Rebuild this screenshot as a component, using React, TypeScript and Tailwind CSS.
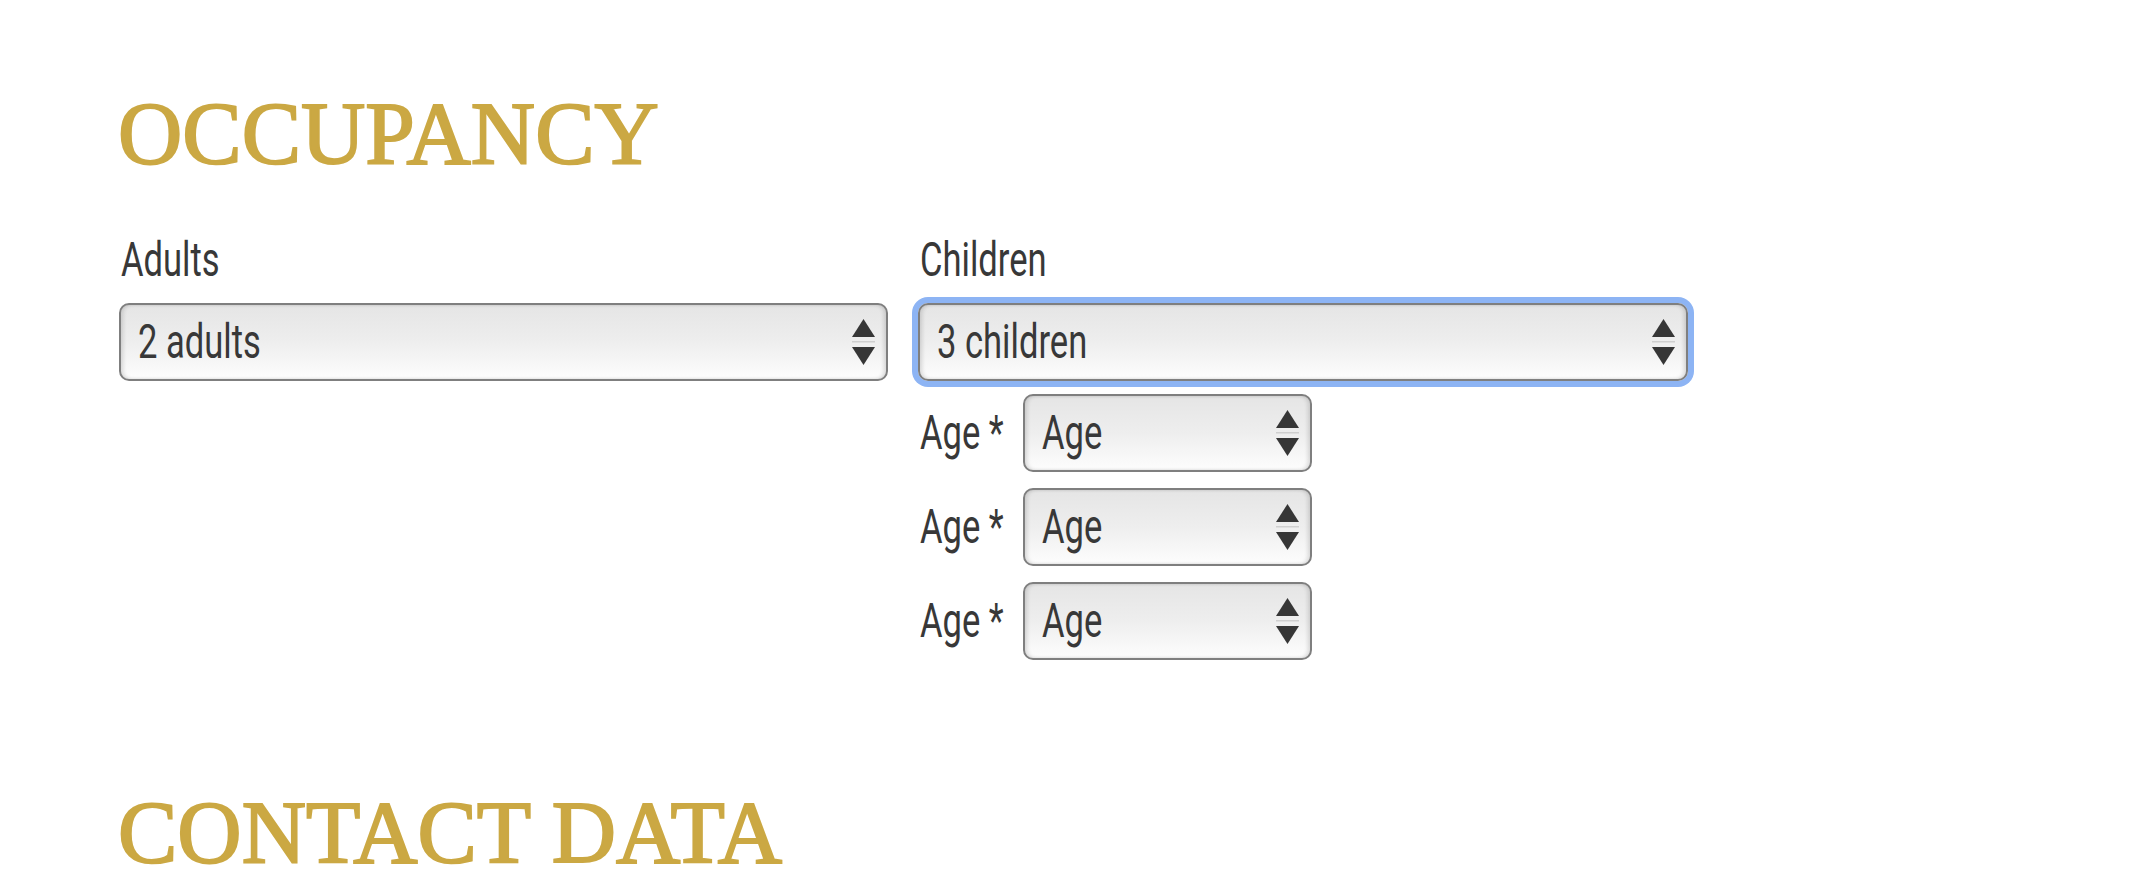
import type { ReactNode } from "react"

// DIN-like condensed look: Roboto squeezed horizontally
function Cond({ children, className = "" }: { children: ReactNode; className?: string }) {
  return (
    <span
      className={`inline-block origin-left scale-x-[0.72] whitespace-nowrap font-['Roboto','Liberation_Sans',sans-serif] text-[48px] leading-none text-[#383838] ${className}`}
    >
      {children}
    </span>
  )
}

function Arrows() {
  return (
    <svg width="23" height="46" viewBox="0 0 23 46" className="shrink-0">
      <path d="M0 18 L11.5 0 L23 18 Z" fill="#363636" />
      <rect x="0" y="22" width="23" height="1.5" fill="#cfcfcf" />
      <path d="M0 28 L23 28 L11.5 46 Z" fill="#363636" />
    </svg>
  )
}

function FakeSelect({ children, focused, className = "" }: { children: ReactNode; focused?: boolean; className?: string }) {
  const shadow = focused
    ? "shadow-[0_0_0_6px_#8db4f4,inset_3px_0_4px_-1px_rgba(0,0,0,0.14),inset_-3px_0_4px_-1px_rgba(0,0,0,0.14)]"
    : "shadow-[inset_3px_0_4px_-1px_rgba(0,0,0,0.14),inset_-3px_0_4px_-1px_rgba(0,0,0,0.14)]"
  return (
    <div
      className={`flex h-[78px] items-center justify-between overflow-hidden rounded-[10px] border-2 border-[#7f7f7f] bg-gradient-to-b from-[#e5e5e5] via-[#eeeeee] to-[#fdfdfd] pl-[17px] pr-[11px] ${shadow} ${className}`}
    >
      <Cond>{children}</Cond>
      <Arrows />
    </div>
  )
}

function Heading({ children }: { children: ReactNode }) {
  return (
    <h2 className="ml-[-1px] font-['Liberation_Serif','Times_New_Roman',serif] text-[89px] leading-none text-[#cba843] [-webkit-text-stroke:2px_#cba843]">
      {children}
    </h2>
  )
}

export default function App() {
  return (
    <div className="min-h-[892px] bg-white pl-[119px] pt-[89px]">
      <Heading>OCCUPANCY</Heading>

      <div className="mt-[58px] grid grid-cols-[769px_770px] gap-x-[30px]">
        <div className="flex flex-col">
          <label className="pl-[2px]">
            <Cond>Adults</Cond>
          </label>
          <FakeSelect className="mt-[19px]">2 adults</FakeSelect>
        </div>

        <div className="flex flex-col">
          <label className="pl-[2px]">
            <Cond>Children</Cond>
          </label>
          <FakeSelect focused className="mt-[19px]">3 children</FakeSelect>

          <div className="mt-[13px] flex flex-col gap-[16px]">
            {[0, 1, 2].map((i) => (
              <div key={i} className="flex items-center">
                <div className="w-[105px] shrink-0 pl-[2px]">
                  <Cond>Age *</Cond>
                </div>
                <FakeSelect className="w-[289px]">Age</FakeSelect>
              </div>
            ))}
          </div>
        </div>
      </div>

      <div className="mt-[128px]">
        <Heading>CONTACT DATA</Heading>
      </div>
    </div>
  )
}
